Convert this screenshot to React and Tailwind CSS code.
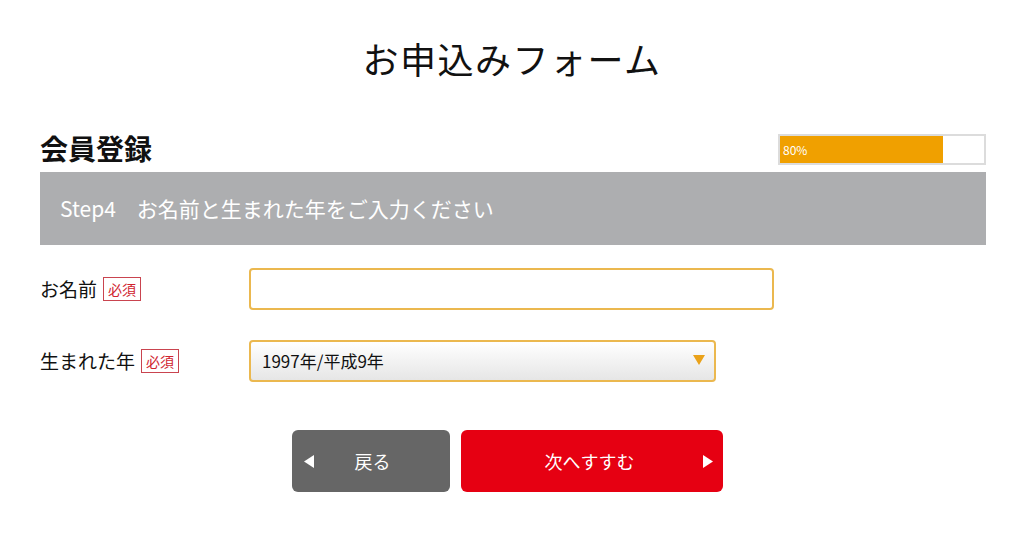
import React, { useState } from 'react';

const font = { fontFamily: '"Noto Sans CJK JP", "Noto Sans", sans-serif' };

const Required = () => (
    <span className="inline-flex items-center justify-center h-[24px] px-[4px] border border-[#c9444f] text-[#d0232f] text-[14px] leading-none">
        必須
    </span>
);

const App = () => {
    const [name, setName] = useState('');
    const [year, setYear] = useState('1997');

    return (
        <div className="w-[1024px] h-[538px] bg-white text-[#111]" style={font}>
            <h1 className="pt-[33px] text-center text-[36px] leading-[50px] font-normal tracking-[1.5px]">
                お申込みフォーム
            </h1>

            <div className="ml-[40px] mr-[38px] mt-[45px]">
                <div className="flex items-end justify-between h-[38px]">
                    <h2 className="text-[28px] font-bold leading-[36px]">会員登録</h2>
                    <div className="w-[208px] h-[31px] border-2 border-[#dcdcdc] bg-white mb-[1px]">
                        <div className="h-full w-[80%] bg-[#f0a000] flex items-center pl-[3px]">
                            <span className="text-white text-[12px] leading-none">80%</span>
                        </div>
                    </div>
                </div>

                <div className="mt-[6px] h-[73px] bg-[#adaeb0] flex items-center pl-[20px]">
                    <p className="text-white text-[21px] leading-none">Step4　お名前と生まれた年をご入力ください</p>
                </div>

                <div className="mt-[23px] flex items-center">
                    <div className="w-[209px] flex items-center gap-[6px]">
                        <span className="text-[19px]">お名前</span>
                        <Required />
                    </div>
                    <input
                        value={name}
                        onChange={(e) => setName(e.target.value)}
                        className="w-[525px] h-[42px] border-2 border-[#ebb84f] rounded-[4px] px-3 text-[16px] outline-none"
                    />
                </div>

                <div className="mt-[30px] flex items-center">
                    <div className="w-[209px] flex items-center gap-[6px]">
                        <span className="text-[19px]">生まれた年</span>
                        <Required />
                    </div>
                    <div className="relative w-[467px] h-[42px]">
                        <select
                            value={year}
                            onChange={(e) => setYear(e.target.value)}
                            className="appearance-none w-full h-full border-2 border-[#ebb84f] rounded-[4px] pl-[11px] text-[17px] bg-gradient-to-b from-white to-[#e6e6e6] outline-none"
                            style={font}
                        >
                            <option value="1997">1997年/平成9年</option>
                            <option value="1998">1998年/平成10年</option>
                        </select>
                        <svg width="12" height="10" viewBox="0 0 12 10" className="absolute right-[11px] top-[15px] pointer-events-none">
                            <path d="M0 0h12L6 10z" fill="#eaa21a" />
                        </svg>
                    </div>
                </div>

                <div className="mt-[48px] flex justify-center gap-[11px] pr-[12px]">
                    <button className="relative w-[158px] h-[62px] rounded-[6px] bg-[#666] text-white text-[18px] flex items-center justify-center">
                        <svg width="10" height="13" viewBox="0 0 10 13" className="absolute left-[12px] top-[25px]">
                            <path d="M10 0v13L0 6.5z" fill="#fff" />
                        </svg>
                        <span className="ml-[4px]">戻る</span>
                    </button>
                    <button className="relative w-[262px] h-[62px] rounded-[6px] bg-[#e60012] text-white text-[18px] flex items-center justify-center">
                        <span className="-ml-[4px]">次へすすむ</span>
                        <svg width="10" height="13" viewBox="0 0 10 13" className="absolute right-[10px] top-[25px]">
                            <path d="M0 0v13L10 6.5z" fill="#fff" />
                        </svg>
                    </button>
                </div>
            </div>
        </div>
    );
};

export default App;
